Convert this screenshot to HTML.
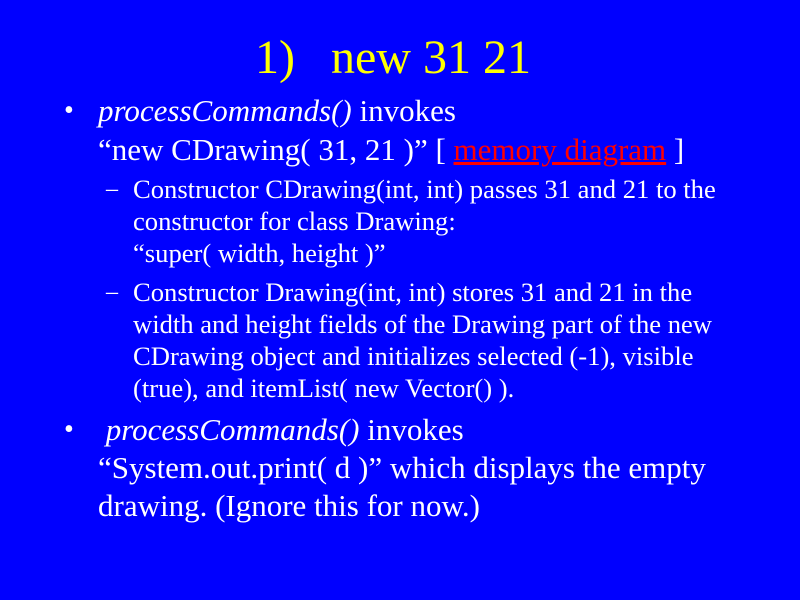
<!DOCTYPE html>
<html><head><meta charset="utf-8"><style>
body{margin:0;width:800px;height:600px;background:#0000ff;overflow:hidden;position:relative;font-family:"Liberation Serif",serif;color:#fff}
div{position:absolute;white-space:nowrap}
.t{left:0;width:786px;text-align:center;top:28px;font-size:48px;line-height:60px;color:#ffff00}
.l1{font-size:31px;line-height:38px;left:98px}
.l2{font-size:26.6px;line-height:32px;left:133px}
.b{font-size:28px;line-height:38px;left:64px}
.d{font-size:24px;line-height:32px;left:106px}
.r{color:#ff0000;text-decoration:underline}
</style></head><body>
<div class="t">1)&nbsp;&nbsp; new 31 21</div>
<div class="b" style="top:92px">•</div>
<div class="l1" style="top:92px"><i>processCommands()</i> invokes</div>
<div class="l1" style="top:131px">“new CDrawing( 31, 21 )” [ <span class="r">memory diagram</span> ]</div>
<div class="d" style="top:173px">–</div>
<div class="l2" style="top:173px">Constructor CDrawing(int, int) passes 31 and 21 to the</div>
<div class="l2" style="top:205px">constructor for class Drawing:</div>
<div class="l2" style="top:237px">“super( width, height )”</div>
<div class="d" style="top:276px">–</div>
<div class="l2" style="top:276px">Constructor Drawing(int, int) stores 31 and 21 in the</div>
<div class="l2" style="top:308px">width and height fields of the Drawing part of the new</div>
<div class="l2" style="top:340px">CDrawing object and initializes selected (-1), visible</div>
<div class="l2" style="top:372px">(true), and itemList( new Vector() ).</div>
<div class="b" style="top:411px">•</div>
<div class="l1" style="top:411px">&nbsp;<i>processCommands()</i> invokes</div>
<div class="l1" style="top:449px">“System.out.print( d )” which displays the empty</div>
<div class="l1" style="top:487px">drawing. (Ignore this for now.)</div>
</body></html>
